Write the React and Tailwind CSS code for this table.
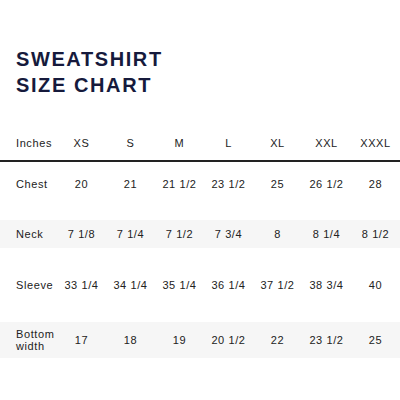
const sizes = ['XS', 'S', 'M', 'L', 'XL', 'XXL', 'XXXL'];

const rows = [
    { label: 'Chest', values: ['20', '21', '21 1/2', '23 1/2', '25', '26 1/2', '28'], cls: 'h-[44px]' },
    { label: 'Neck', values: ['7 1/8', '7 1/4', '7 1/2', '7 3/4', '8', '8 1/4', '8 1/2'], cls: 'mt-[14px] h-[28px] bg-[#f6f6f6]' },
    { label: 'Sleeve', values: ['33 1/4', '34 1/4', '35 1/4', '36 1/4', '37 1/2', '38 3/4', '40'], cls: 'h-[74px]' },
    { label: 'Bottom width', values: ['17', '18', '19', '20 1/2', '22', '23 1/2', '25'], cls: 'h-[36px] bg-[#f6f6f6]' },
];

export default function App() {
    return (
        <div className="w-[400px] h-[400px] bg-white overflow-hidden text-[#222]" style={{ fontFamily: '"Liberation Sans", Arial, sans-serif' }}>

            {/* TITLE */}
            <div className="pt-[46px] pl-[16px] text-[20px] leading-[26px] font-bold tracking-[1.6px] text-[#161a3c]">
                <div>SWEATSHIRT</div>
                <div>SIZE CHART</div>
            </div>

            {/* HEADER ROW */}
            <div className="mt-[28px] h-[34px] grid grid-cols-[57px_repeat(7,49px)] items-center text-[11px] tracking-[0.6px]">
                <div className="pl-[16px]">Inches</div>
                {sizes.map(s => (
                    <div key={s} className="text-center">{s}</div>
                ))}
            </div>
            <div className="h-[2px] bg-[#222]" />

            {/* DATA ROWS */}
            {rows.map(row => (
                <div key={row.label} className={`grid grid-cols-[57px_repeat(7,49px)] items-center text-[11px] tracking-[0.6px] ${row.cls}`}>
                    <div className="pl-[16px] leading-[12px] w-[50px]">{row.label}</div>
                    {row.values.map((v, i) => (
                        <div key={i} className="text-center whitespace-nowrap">{v}</div>
                    ))}
                </div>
            ))}

        </div>
    );
}
